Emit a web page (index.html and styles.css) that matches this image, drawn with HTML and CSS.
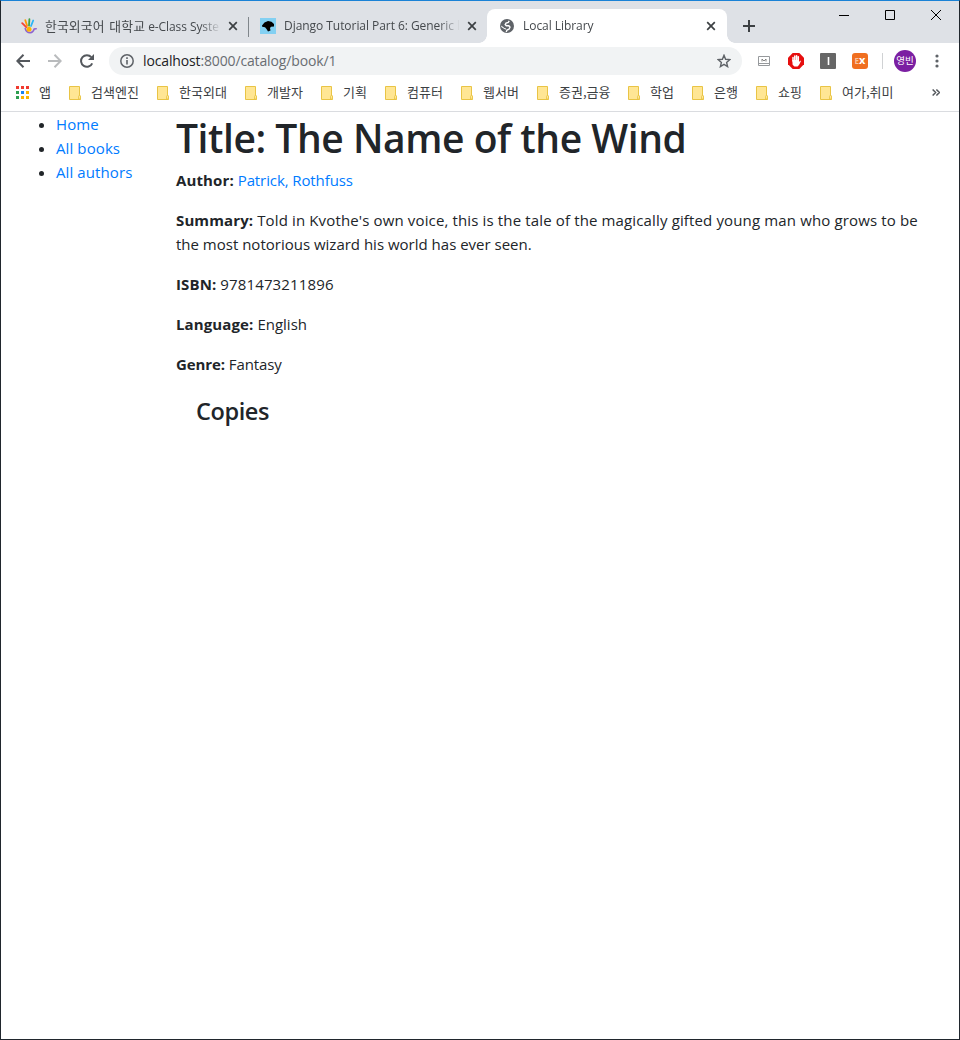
FILE: index.html
```html
<!DOCTYPE html>
<html lang="ko">
<head>
<meta charset="utf-8">
<title>Local Library</title>
<link rel="stylesheet" href="styles.css">
</head>
<body>
<svg width="0" height="0" class="defs">
  <symbol id="x" viewBox="0 0 10 10"><path d="M1.200 1.200l7.600 7.600M8.800 1.200l-7.600 7.600" stroke="#3c4043" stroke-width="1.700" fill="none"/></symbol>
  <symbol id="folder" viewBox="0 0 12 14"><path d="M.5.5h10v9.500h1v3.500H.5z" fill="#ffe694" stroke="#e9c445"/><path d="M9.500 13V10.500q0-1 1-1t1 1V13z" fill="#ffe694" stroke="#e9c445" stroke-width=".8"/></symbol>
</svg>
<div class="window">
  <header class="titlebar">
    <div class="tab tab-first">
      <svg class="fav" width="16" height="16" viewBox="0 0 16 16" fill="none" stroke-linecap="round" stroke-width="1.8"><path d="M1.200 5.200l4 4" stroke="#f44336"/><path d="M4.300 2.200l1.800 5.600" stroke="#ff9800"/><path d="M8.400 1.200L8 7.600" stroke="#43a047"/><path d="M12.200 2.500L10 8" stroke="#29b6f6"/><path d="M4.200 10.500q1 4 5 4.300 3-.3 4-3.800l2-.3" stroke="#8e63ce" stroke-width="1.500"/><circle cx="8" cy="11.300" r="2.500" fill="#ffb300"/></svg>
      <span class="tab-title"><span class="ko">한국외국어 대학교</span> e-Class Syste</span>
      <svg class="close" width="10" height="10"><use href="#x"/></svg>
    </div>
    <i class="tab-sep"></i>
    <div class="tab tab-second">
      <svg class="fav" width="16" height="16" viewBox="0 0 16 16"><path fill="#83d0f2" d="M0 0h16v16H0z"/><path d="M2 7.500L4.500 4.500 8 3l3.500.7L14 6v2.500l-3 .3-1 1.200.5 2.500L8 13.500 6.500 11 5 9.200 2.200 8.800z" fill="#000"/></svg>
      <span class="tab-title">Django Tutorial Part 6: Generic l</span>
      <svg class="close" width="10" height="10"><use href="#x"/></svg>
    </div>
    <div class="tab tab-active">
      <svg class="fav" width="16" height="16" viewBox="0 0 16 16"><circle cx="8" cy="8" r="7" fill="#5f6368"/><path d="M10.200 2.800L9.200 4.500 7 5.100 6.200 6.600 7.300 7.700h2.500l1.200 1.500-1 2-2 .8-.8 1.900" fill="none" stroke="#fff" stroke-width="1.400"/><path d="M2.300 7.500l3 2.400 1.500.4v1.500L5 10.800 2.300 9z" fill="#fff"/></svg>
      <span class="tab-title">Local Library</span>
      <svg class="close" width="10" height="10"><use href="#x"/></svg>
    </div>
    <svg class="newtab" width="12" height="12" viewBox="0 0 12 12"><path d="M6 0v12M0 6h12" stroke="#3c4043" stroke-width="2"/></svg>
    <div class="controls">
      <svg width="10" height="10"><path d="M0 5.500h10" stroke="#000"/></svg>
      <svg width="10" height="10"><path d="M.5.5h9v9h-9z" fill="none" stroke="#000"/></svg>
      <svg width="10" height="10"><path d="M0 0l10 10M10 0L0 10" stroke="#000"/></svg>
    </div>
  </header>
  <nav class="toolbar">
    <svg class="back" width="14" height="14" viewBox="0 0 14 14" fill="none" stroke="#54585d" stroke-width="2"><path d="M14 7H1.500M7.500.8L1.300 7l6.200 6.200"/></svg>
    <svg class="fwd" width="14" height="14" viewBox="0 0 14 14" fill="none" stroke="#b9bbbd" stroke-width="2"><path d="M0 7h12.500M6.500.8L12.700 7l-6.200 6.200"/></svg>
    <svg class="reload" width="14" height="14" viewBox="0 0 14 14"><path d="M12.200 9.300A5.800 5.800 0 1 1 11.300 3.200" fill="none" stroke="#54585d" stroke-width="2"/><path d="M14 0v6H8z" fill="#54585d"/></svg>
    <div class="omnibox">
      <svg width="14" height="14" viewBox="0 0 14 14"><circle cx="7" cy="7" r="6.200" fill="none" stroke="#5f6368" stroke-width="1.500"/><path d="M7 6v4.500M7 3.300v1.600" stroke="#5f6368" stroke-width="1.600"/></svg>
      <span class="url"><b>localhost</b>:8000/catalog/book/1</span>
      <svg class="star" width="14" height="14" viewBox="0 0 14 14"><path d="M7 1.300l1.600 4 4.300.3-3.300 2.800 1 4.200L7 10.300l-3.600 2.300 1-4.200L1.100 5.600l4.300-.3z" fill="none" stroke="#5f6368" stroke-width="1.400"/></svg>
    </div>
    <svg class="ext1" width="12" height="10" viewBox="0 0 12 10" fill="none"><path d="M.5.5h11v9H.5zM.5 7.500h11" stroke="#96999c"/><path d="M4 5.500v-2.500l2 2 2-2v2.500" stroke="#777" stroke-width=".9"/></svg>
    <svg class="ext2" width="16" height="16" viewBox="0 0 16 16"><path d="M4.700 0h6.600L16 4.700v6.600L11.300 16H4.700L0 11.300V4.700z" fill="#e60f0f"/><path d="M5 8V4.500M6.800 7V2.900M8.600 7V2.700M10.300 7.500V3.800" stroke="#fff" stroke-width="1.500" stroke-linecap="round"/><path d="M4.300 7h6.700v2l1.200-1.500.7.700L11 12 9.500 13.600H6.400L4.600 11.800z" fill="#fff"/></svg>
    <svg class="ext3" width="16" height="16" viewBox="0 0 16 16"><rect width="16" height="16" rx="1" fill="#666"/><path d="M8.500 4v8" stroke="#fff" stroke-width="1.600"/></svg>
    <span class="ext4"><i>E</i>x</span>
    <i class="tool-sep"></i>
    <span class="avatar">영빈</span>
    <svg class="menu" width="4" height="14" viewBox="0 0 4 14" fill="#5f6368"><circle cx="2" cy="2" r="1.600"/><circle cx="2" cy="7" r="1.600"/><circle cx="2" cy="12" r="1.600"/></svg>
  </nav>
  <nav class="bookmarks">
    <svg width="13" height="13" viewBox="0 0 13 13"><path fill="#f03a2f" d="M0 0h3v3H0zM5 0h3v3H5zM10 0h3v3h-3z"/><path fill="#2e9e50" d="M0 5h3v3H0zM0 10h3v3H0z"/><path fill="#1a82f0" d="M5 5h3v3H5z"/><path fill="#fbb300" d="M10 5h3v3h-3zM5 10h3v3H5zM10 10h3v3h-3z"/></svg>
    <span class="apps">앱</span>
    <a class="bm c4"><svg width="12" height="14"><use href="#folder"/></svg>검색엔진</a>
    <a class="bm c4"><svg width="12" height="14"><use href="#folder"/></svg>한국외대</a>
    <a class="bm c3"><svg width="12" height="14"><use href="#folder"/></svg>개발자</a>
    <a class="bm c2"><svg width="12" height="14"><use href="#folder"/></svg>기획</a>
    <a class="bm c3"><svg width="12" height="14"><use href="#folder"/></svg>컴퓨터</a>
    <a class="bm c3"><svg width="12" height="14"><use href="#folder"/></svg>웹서버</a>
    <a class="bm c5"><svg width="12" height="14"><use href="#folder"/></svg>증권,금융</a>
    <a class="bm c2"><svg width="12" height="14"><use href="#folder"/></svg>학업</a>
    <a class="bm c2"><svg width="12" height="14"><use href="#folder"/></svg>은행</a>
    <a class="bm c2"><svg width="12" height="14"><use href="#folder"/></svg>쇼핑</a>
    <a class="bm c5"><svg width="12" height="14"><use href="#folder"/></svg>여가,취미</a>
    <svg class="more" width="8" height="7" viewBox="0 0 8 7"><path d="M.6.500l3 3-3 3M4.400.500l3 3-3 3" fill="none" stroke="#54585d" stroke-width="1.500"/></svg>
  </nav>
  <main class="page">
    <ul class="sidebar">
      <li><a>Home</a></li>
      <li><a>All books</a></li>
      <li><a>All authors</a></li>
    </ul>
    <section class="content">
      <h1>Title: The Name of the Wind</h1>
      <p><strong>Author:</strong> <a class="tight">Patrick, Rothfuss</a></p>
      <p><strong>Summary:</strong> <span class="wide">Told in Kvothe's own voice, this is the tale of the magically gifted young man who grows to be</span><br>the most notorious wizard his world has ever seen.</p>
      <p><strong>ISBN:</strong> <span class="wide">9781473211896</span></p>
      <p><strong>Language:</strong> English</p>
      <p><strong class="tight">Genre:</strong> <span class="tight">Fantasy</span></p>
      <h4>Copies</h4>
    </section>
  </main>
</div>
</body>
</html>
```
FILE: styles.css
```css
* { box-sizing: border-box; }
body { margin: 0; background: #fff; }
svg { display: block; flex: none; }
.defs { position: absolute; }
.window {
  width: 960px; height: 1040px; overflow: hidden;
  display: flex; flex-direction: column;
  border: 1px solid #20262d; border-top-color: #1a82d6;
  background: #fff;
}
.titlebar { height: 42px; flex: none; display: flex; align-items: center; background: #dee1e6; }
.tab { height: 34px; margin-top: 8px; display: flex; align-items: center; }
.tab-first { width: 247px; padding-left: 20px; }
.tab-second { width: 237px; padding-left: 10px; }
.tab-active { width: 240px; padding-left: 12px; background: #fff; border-radius: 8px 8px 0 0; position: relative; }
.tab-active::before, .tab-active::after {
  content: ""; position: absolute; bottom: 0; width: 8px; height: 8px;
}
.tab-active::before { left: -8px; background: radial-gradient(circle at 0 0, transparent 7.5px, #fff 8px); }
.tab-active::after { right: -8px; background: radial-gradient(circle at 100% 0, transparent 7.5px, #fff 8px); }
.tab-sep { width: 1px; height: 20px; margin: 9px 1px 0 0; background: #80868b; }
.tab-title {
  margin-left: 8px; width: 176px; white-space: nowrap;
  font: 12px/18px "Open Sans", "Noto Sans CJK KR", sans-serif; color: #45494d;
  letter-spacing: -.05px;
  -webkit-mask-image: linear-gradient(90deg, #000 88%, transparent);
}
.tab-first .tab-title { letter-spacing: -.08px; }
.tab-title .ko { font: 12.8px/18px "Noto Sans CJK KR", sans-serif; letter-spacing: .15px; word-spacing: 1px; }
.close { margin-left: 7px; }
.newtab { margin: 8px 0 0 16px; }
.controls { display: flex; gap: 36px; margin: -14px 0 0 84px; }
.toolbar { height: 36px; flex: none; display: flex; align-items: center; padding-left: 15px; }
.fwd { margin-left: 18px; }
.reload { margin-left: 18px; }
.omnibox {
  width: 633px; height: 28px; margin-left: 15px; padding: 0 11px;
  display: flex; align-items: center; border-radius: 14px; background: #f1f3f4;
}
.url { flex: 1; margin-left: 9px; font: 14px/20px "Open Sans", sans-serif; letter-spacing: -.14px; color: #696d72; }
.url b { font-weight: 400; color: #202124; }
.ext1 { margin-left: 16px; }
.ext2 { margin-left: 18px; }
.ext3 { margin-left: 16px; }
.ext4 {
  width: 16px; height: 16px; margin-left: 16px; border-radius: 3px; background: #f06f20;
  font: bold 11px/14px "Open Sans", sans-serif; color: #fff; text-align: center;
}
.ext4 i { font-size: 8px; font-style: normal; color: #fac39f; }
.tool-sep { width: 1px; height: 16px; margin-left: 14px; background: #d0d2d4; }
.avatar {
  width: 22px; height: 22px; margin-left: 11px; border-radius: 50%; background: #7b1fa2;
  font: 9.500px/21px "Noto Sans CJK KR", sans-serif; color: #fff; text-align: center;
}
.menu { margin-left: 19px; }
.bookmarks {
  height: 33px; flex: none; display: flex; align-items: center; padding: 0 0 5px 15px;
  border-bottom: 1px solid #dadce0;
  font: 13px/18px "Noto Sans CJK KR", sans-serif; color: #3c4043;
}
.apps { width: 30px; margin: 0 0 2px 10px; }
.bm { display: flex; align-items: center; gap: 10px; margin-bottom: 2px; white-space: nowrap; }
.bm svg { margin-top: 2px; }
.c2 { width: 64px; }
.c3 { width: 76px; }
.c4 { width: 88px; }
.c5 { width: 91px; }
.more { margin-left: 21px; }
.page { flex: 1; display: flex; font: 15px/24px "Open Sans", sans-serif; color: #212529; }
.sidebar { width: 160px; margin: 0; padding: 0 0 0 55px; letter-spacing: .1px; }
a { color: #007bff; }
.bm { color: inherit; }
.content { flex: 1; padding: 2px 0 0 15px; }
h1 { margin: 0 0 6px; font: 600 39px/48px "Open Sans", sans-serif; letter-spacing: -.45px; white-space: nowrap; }
p { margin: 0 0 16px; white-space: nowrap; }
strong { letter-spacing: .12px; }
.tight { letter-spacing: -.1px; }
h4 { margin: 21px 0 0 20px; font: 600 23.5px/29px "Open Sans", sans-serif; letter-spacing: -.4px; }
.wide { letter-spacing: .14px; }
```
